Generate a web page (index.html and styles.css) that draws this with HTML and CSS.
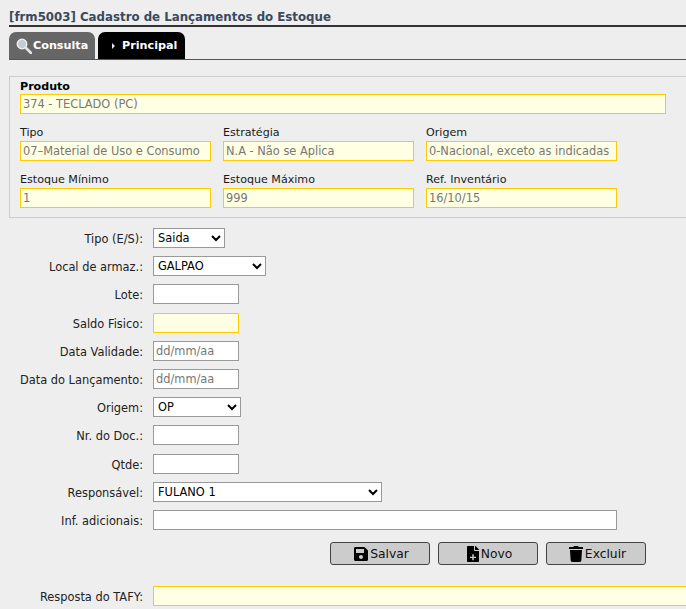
FILE: index.html
```html
<!DOCTYPE html>
<html lang="pt">
<head>
<meta charset="utf-8">
<title>Cadastro de Lançamentos do Estoque</title>
<link rel="stylesheet" href="styles.css">
</head>
<body>
<div class="page">
  <h1 class="title">[frm5003] Cadastro de Lançamentos do Estoque</h1>
  <div class="tabs">
    <div class="tab tab-off">
      <svg class="ico-search" viewBox="0 0 16 16" width="16" height="16"><circle cx="6" cy="6" r="4.800" fill="#c6cdd2" stroke="#f4f4f4" stroke-width="1.300"/><path d="M9.500 9.500L15 15" stroke="#e4e4e4" stroke-width="2.600" stroke-linecap="round"/></svg>
      <span>Consulta</span>
    </div>
    <div class="tab tab-on">
      <svg class="ico-arrow" viewBox="0 0 3 6" width="3" height="6"><path d="M0 0L3 3L0 6Z" fill="#e6e6e6"/></svg>
      <span>Principal</span>
    </div>
  </div>
  <section class="panel">
    <div class="field">
      <label class="cap cap-strong">Produto</label>
      <input class="inp ro full" value="374 - TECLADO (PC)" readonly>
    </div>
    <div class="triple">
      <div class="field"><label class="cap">Tipo</label><input class="inp ro" value="07–Material de Uso e Consumo" readonly></div>
      <div class="field"><label class="cap">Estratégia</label><input class="inp ro" value="N.A - Não se Aplica" readonly></div>
      <div class="field"><label class="cap">Origem</label><input class="inp ro" value="0-Nacional, exceto as indicadas" readonly></div>
      <div class="field"><label class="cap">Estoque Mínimo</label><input class="inp ro" value="1" readonly></div>
      <div class="field"><label class="cap">Estoque Máximo</label><input class="inp ro" value="999" readonly></div>
      <div class="field"><label class="cap">Ref. Inventário</label><input class="inp ro" value="16/10/15" readonly></div>
    </div>
  </section>
  <form class="form">
    <label class="lbl">Tipo (E/S):</label>
    <div><select class="inp sel w72"><option>Saida</option></select></div>
    <label class="lbl">Local de armaz.:</label>
    <div><select class="inp sel w113"><option>GALPAO</option></select></div>
    <label class="lbl">Lote:</label>
    <div><input class="inp w86"></div>
    <label class="lbl">Saldo Fisico:</label>
    <div><input class="inp ro w86" readonly></div>
    <label class="lbl">Data Validade:</label>
    <div><input class="inp w86" placeholder="dd/mm/aa"></div>
    <label class="lbl">Data do Lançamento:</label>
    <div><input class="inp w86" placeholder="dd/mm/aa"></div>
    <label class="lbl">Origem:</label>
    <div><select class="inp sel w88"><option>OP</option></select></div>
    <label class="lbl">Nr. do Doc.:</label>
    <div><input class="inp w86"></div>
    <label class="lbl">Qtde:</label>
    <div><input class="inp w86"></div>
    <label class="lbl">Responsável:</label>
    <div><select class="inp sel w229"><option>FULANO 1</option></select></div>
    <label class="lbl">Inf. adicionais:</label>
    <div><input class="inp w464"></div>
  </form>
  <div class="actions">
    <button class="btn" type="button">
      <svg viewBox="0 0 448 512" width="14" height="16"><path fill="#000" d="M433.900 129.900l-83.900-83.900A48 48 0 0 0 316.100 32H48C21.500 32 0 53.500 0 80v352c0 26.500 21.500 48 48 48h352c26.500 0 48-21.500 48-48V163.900a48 48 0 0 0-14.100-34zM224 416c-35.300 0-64-28.700-64-64s28.700-64 64-64 64 28.700 64 64-28.700 64-64 64zm96-304.500V212c0 6.600-5.400 12-12 12H76c-6.600 0-12-5.400-12-12V108c0-6.600 5.400-12 12-12h228.500c3.200 0 6.200 1.300 8.500 3.500l3.500 3.500c2.300 2.300 3.500 5.300 3.500 8.500z"/></svg>
      <span>Salvar</span>
    </button>
    <button class="btn" type="button">
      <svg viewBox="0 0 384 512" width="12" height="16"><path fill="#000" d="M224 136V0H24C10.700 0 0 10.700 0 24v464c0 13.300 10.700 24 24 24h336c13.300 0 24-10.700 24-24V160H248c-13.200 0-24-10.800-24-24zm65.200 216.500v22c0 6.600-5.400 12-12 12H216v61c0 6.600-5.400 12-12 12h-24c-6.600 0-12-5.400-12-12v-61h-61.200c-6.600 0-12-5.400-12-12v-22c0-6.600 5.400-12 12-12H168v-61c0-6.600 5.400-12 12-12h24c6.600 0 12 5.400 12 12v61h61.200c6.600 0 12 5.400 12 12zM384 121.900v6.100H256V0h6.100c6.400 0 12.500 2.500 17 7l97.900 98c4.500 4.500 7 10.600 7 16.900z"/></svg>
      <span>Novo</span>
    </button>
    <button class="btn" type="button">
      <svg viewBox="0 0 448 512" width="14" height="16"><path fill="#000" d="M432 32H312l-9.400-18.700A24 24 0 0 0 281.100 0H166.800a23.700 23.700 0 0 0-21.400 13.300L136 32H16A16 16 0 0 0 0 48v32a16 16 0 0 0 16 16h416a16 16 0 0 0 16-16V48a16 16 0 0 0-16-16zM53.200 467a48 48 0 0 0 47.900 45h245.800a48 48 0 0 0 47.900-45L416 128H32z"/></svg>
      <span>Excluir</span>
    </button>
  </div>
  <div class="tafy">
    <label class="lbl">Resposta do TAFY:</label>
    <input class="inp ro tafy-input" readonly>
  </div>
</div>
</body>
</html>
```
FILE: styles.css
```css
* { box-sizing: border-box; }
html, body { margin: 0; padding: 0; }
body {
  background: #eeeeee;
  width: 686px;
  height: 609px;
  overflow: hidden;
  font-family: "DejaVu Sans", Verdana, sans-serif;
  font-size: 11px;
  color: #1a1a1a;
}
.page { padding: 8px 0 0 9px; }
.title {
  margin: 0;
  height: 19px;
  border-bottom: 2px solid #333;
  font-size: 11.8px;
  font-weight: bold;
  line-height: 18px;
  color: #3a4a5c;
  white-space: nowrap;
}
.tabs {
  display: flex;
  gap: 3px;
  margin-top: 5px;
  height: 28px;
  border-bottom: 1px solid #555;
}
.tab {
  display: flex;
  align-items: center;
  height: 27px;
  border-radius: 7px 7px 0 0;
  color: #fff;
  font-weight: bold;
  font-size: 11.2px;
}
.tab-off { width: 86px; background: #666; padding-left: 7px; gap: 1px; }
.tab-on { width: 87px; background: #000; padding-left: 14px; gap: 7px; }
.panel {
  margin-top: 16px;
  height: 142px;
  border: 1px solid #ccc;
  border-right: 0;
  padding: 3px 0 0 10px;
  display: flex;
  flex-direction: column;
}
.field { display: flex; flex-direction: column; }
.cap {
  height: 14px;
  line-height: 13px;
  font-size: 11.1px;
  color: #1a1a1a;
}
.cap-strong { font-weight: bold; color: #000; }
.inp {
  height: 20px;
  border: 1px solid #999;
  background: #fff;
  padding: 0 2px;
  font-family: "DejaVu Sans", Verdana, sans-serif;
  font-size: 11.4px;
  color: #111;
  border-radius: 0;
  outline: none;
  margin: 0;
}
.inp::placeholder { color: #777; opacity: 1; }
.ro { background: #ffffe3; border-color: #fdcb00; color: #777; }
.full { width: 646px; }
.triple {
  margin-top: 12px;
  display: grid;
  grid-template-columns: repeat(3, 191px);
  column-gap: 12px;
  row-gap: 11.5px;
}
.triple .inp { width: 191px; }
.triple .cap { height: 15px; }
.form {
  margin-top: 10px;
  display: grid;
  grid-template-columns: 134px 1fr;
  column-gap: 10px;
  grid-auto-rows: 28.2px;
}
.lbl {
  text-align: right;
  font-size: 11.4px;
  line-height: 22px;
  white-space: nowrap;
  color: #222;
}
.form .lbl { margin-left: -10px; }
.sel {
  padding: 0;
  color: #000;
}
.w72 { width: 72px; }
.w86 { width: 86px; }
.w88 { width: 88px; }
.w113 { width: 113px; }
.w229 { width: 229px; }
.w464 { width: 464px; }
.actions {
  margin-top: 4px;
  padding-left: 321px;
  display: flex;
  gap: 8px;
}
.btn {
  width: 100px;
  height: 23px;
  border: 1px solid #444;
  border-radius: 3px;
  background: #ccc;
  display: flex;
  align-items: center;
  justify-content: center;
  gap: 2px;
  padding: 0 0 0 3px;
  font-family: "DejaVu Sans", Verdana, sans-serif;
  font-size: 12.3px;
  color: #111;
}
.tafy {
  margin-top: 21px;
  display: grid;
  grid-template-columns: 134px 1fr;
  column-gap: 10px;
  width: 700px;
}
.tafy-input { width: 540px; }
```
